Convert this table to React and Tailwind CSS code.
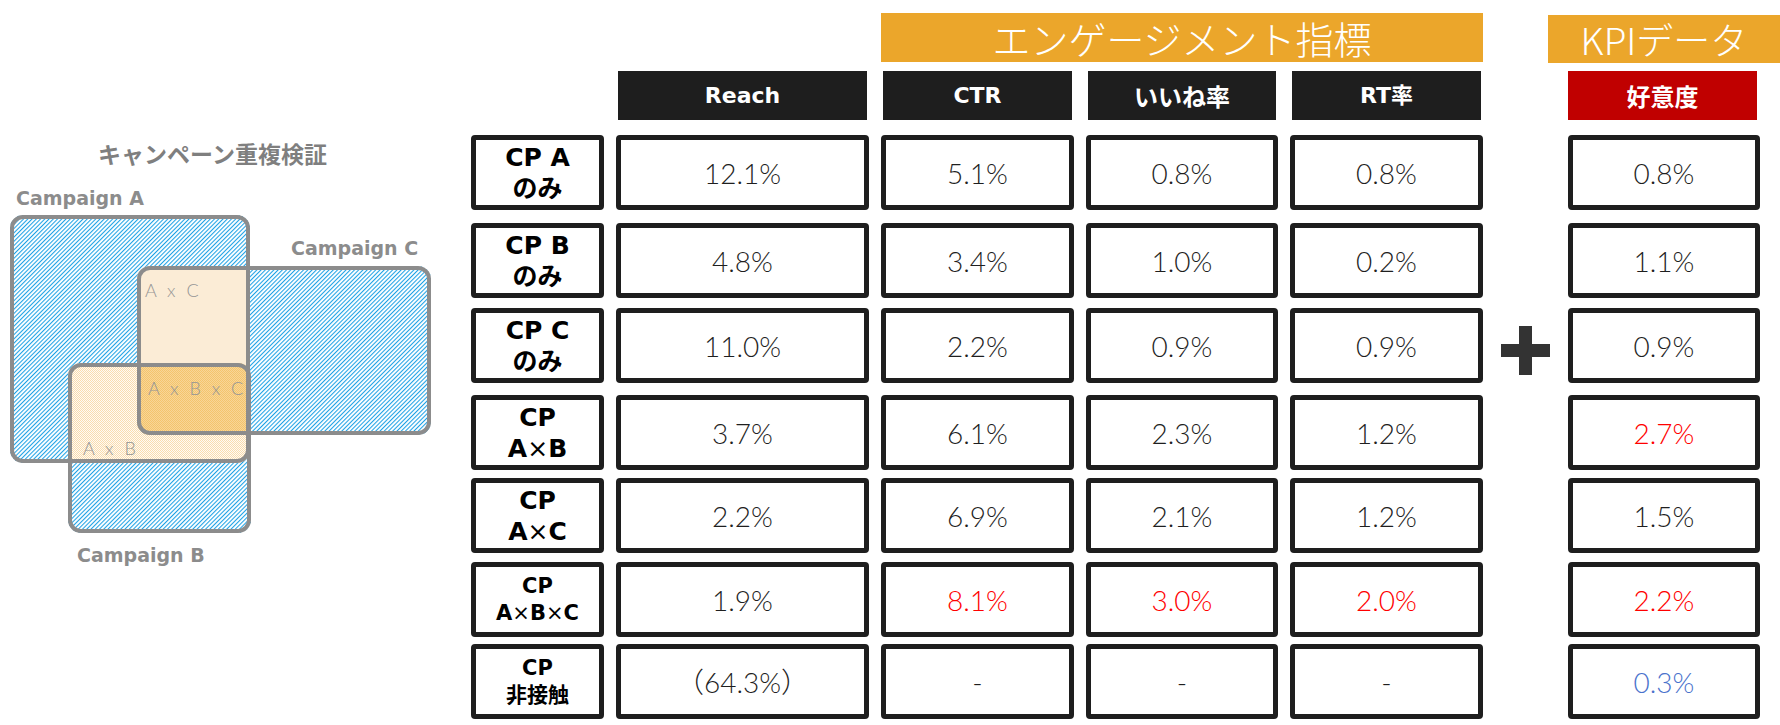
import React from 'react';

const GRID = 'grid grid-cols-[133px_253px_193px_192px_193px_61px_192px] gap-x-[12px]';
const JP = "font-['Noto_Sans_CJK_JP',sans-serif]";
const BOLD_LATIN = "font-['DejaVu_Sans','Noto_Sans_CJK_JP',sans-serif] font-bold";

const tone = {
    red: 'text-[#ff0000]',
    blue: 'text-[#4a72cc]',
    base: 'text-[#1f1f1f]',
};

const rows = [
    { top: ['CP A'], bottom: 'のみ', small: false, mt: 'mt-[15px]', values: [['12.1%'], ['5.1%'], ['0.8%'], ['0.8%'], ['0.8%']] },
    { top: ['CP B'], bottom: 'のみ', small: false, mt: 'mt-[13px]', values: [['4.8%'], ['3.4%'], ['1.0%'], ['0.2%'], ['1.1%']] },
    { top: ['CP C'], bottom: 'のみ', small: false, mt: 'mt-[10px]', values: [['11.0%'], ['2.2%'], ['0.9%'], ['0.9%'], ['0.9%']], plus: true },
    { top: ['CP'], bottom: ['A', 'B'], small: false, mt: 'mt-[12px]', values: [['3.7%'], ['6.1%'], ['2.3%'], ['1.2%'], ['2.7%', 'red']] },
    { top: ['CP'], bottom: ['A', 'C'], small: false, mt: 'mt-[8px]', values: [['2.2%'], ['6.9%'], ['2.1%'], ['1.2%'], ['1.5%']] },
    { top: ['CP'], bottom: ['A', 'B', 'C'], small: true, mt: 'mt-[9px]', values: [['1.9%'], ['8.1%', 'red'], ['3.0%', 'red'], ['2.0%', 'red'], ['2.2%', 'red']] },
    { top: ['CP'], bottom: '非接触', small: true, mt: 'mt-[7px]', values: [['（64.3%）'], ['-'], ['-'], ['-'], ['0.3%', 'blue']] },
];

const Cell = ({ children, className = '' }) => (
    <div className={`h-[75px] border-[5px] border-[#1e1e1e] rounded-[4px] bg-white flex items-center justify-center ${className}`}>
        {children}
    </div>
);

const Label = ({ row }) => {
    const size = row.small ? 'text-[21px] leading-[27px]' : 'text-[25px] leading-[31px]';
    return (
        <Cell>
            <div className={`${BOLD_LATIN} ${size} text-black text-center`}>
                <div>{row.top}</div>
                <div>
                    {Array.isArray(row.bottom)
                        ? row.bottom.map((part, i) => (
                              <React.Fragment key={i}>
                                  {i > 0 && <span className="font-normal">×</span>}
                                  {part}
                              </React.Fragment>
                          ))
                        : row.bottom}
                </div>
            </div>
        </Cell>
    );
};

const Value = ({ v, c }) => (
    <Cell>
        <span className={`font-['Lato','Noto_Sans_CJK_JP',sans-serif] font-light text-[28px] ${tone[c || 'base']}`}>{v}</span>
    </Cell>
);

const Plus = () => (
    <svg width="49" height="49" viewBox="0 0 49 49">
        <rect x="18" y="0" width="13" height="49" fill="#333333" />
        <rect x="0" y="18" width="49" height="13" fill="#333333" />
    </svg>
);

const Venn = () => (
    <svg width="440" height="400" viewBox="0 170 440 400" className="block">
        <defs>
            <pattern id="hatch" width="3" height="3" patternUnits="userSpaceOnUse" patternTransform="rotate(45)">
                <rect width="3" height="3" fill="#ffffff" />
                <rect width="1.05" height="3" fill="#1ea2e6" />
            </pattern>
            <pattern id="dotsLight" width="2" height="2" patternUnits="userSpaceOnUse">
                <rect width="2" height="2" fill="#fffbf4" />
                <rect width="1" height="1" fill="#f9dcae" />
                <rect x="1" y="1" width="1" height="1" fill="#f9dcae" />
            </pattern>
            <pattern id="dotsDeep" width="2" height="2" patternUnits="userSpaceOnUse">
                <rect width="2" height="2" fill="#f8d697" />
                <rect width="1" height="1" fill="#f4c46d" />
                <rect x="1" y="1" width="1" height="1" fill="#f4c46d" />
            </pattern>
            <clipPath id="clipA">
                <rect x="10" y="215" width="240" height="248" rx="13" />
            </clipPath>
            <clipPath id="clipC">
                <rect x="137" y="266" width="294" height="169" rx="13" />
            </clipPath>
        </defs>

        {/* campaign areas */}
        <rect x="10" y="215" width="240" height="248" rx="13" fill="url(#hatch)" />
        <rect x="137" y="266" width="294" height="169" rx="13" fill="url(#hatch)" />
        <rect x="68" y="363" width="183" height="170" rx="13" fill="url(#hatch)" />

        {/* overlaps */}
        <rect x="137" y="266" width="294" height="169" rx="13" fill="#fbecd6" clipPath="url(#clipA)" />
        <rect x="68" y="363" width="183" height="170" rx="13" fill="url(#dotsLight)" clipPath="url(#clipA)" />
        <g clipPath="url(#clipA)">
            <rect x="68" y="363" width="183" height="170" rx="13" fill="url(#dotsDeep)" clipPath="url(#clipC)" />
        </g>

        {/* outlines */}
        <g fill="none" stroke="#8c8c8c" strokeWidth="4">
            <rect x="12" y="217" width="236" height="244" rx="11" />
            <rect x="139" y="268" width="290" height="165" rx="11" />
            <rect x="70" y="365" width="179" height="166" rx="11" />
        </g>

        <g fontFamily="DejaVu Sans, sans-serif" fontWeight="700" fontSize="19" fill="#8c8c8c">
            <text x="16" y="205">Campaign A</text>
            <text x="291" y="255">Campaign C</text>
            <text x="77" y="562">Campaign B</text>
        </g>
        <g fontFamily="Lato, sans-serif" fontWeight="300" fontSize="18" fill="#959595" letterSpacing="3">
            <text x="145" y="297">A x C</text>
            <text x="148" y="395">A x B x C</text>
            <text x="83" y="455">A x B</text>
        </g>
    </svg>
);

export default function App() {
    return (
        <div className="w-[1780px] h-[725px] bg-white flex overflow-hidden">
            {/* Left: overlap diagram */}
            <div className="w-[471px] shrink-0">
                <div className={`${JP} w-[425px] mt-[139px] text-center text-[23px] leading-[28px] font-bold text-[#7f7f7f]`}>
                    キャンペーン重複検証
                </div>
                <div className="mt-[3px]">
                    <Venn />
                </div>
            </div>

            {/* Right: table */}
            <div className="flex flex-col">
                <div className={`${GRID} h-[63px]`}>
                    <div className="col-start-3 col-span-3 mt-[13px] h-[49px] bg-[#eba62b] flex items-center justify-center">
                        <span className={`${JP} font-light text-[38px] leading-none text-white`}>エンゲージメント指標</span>
                    </div>
                    <div className="col-start-7 ml-[-20px] w-[232px] mt-[15px] h-[48px] bg-[#eba62b] flex items-center justify-center">
                        <span className={`${JP} font-light text-[37px] leading-none text-white`}>KPIデータ</span>
                    </div>
                </div>

                <div className={`${GRID} mt-[8px] h-[49px]`}>
                    <div className={`col-start-2 mx-[2px] bg-[#1e1e1e] flex items-center justify-center text-white text-[22px] ${BOLD_LATIN}`}>Reach</div>
                    <div className={`mx-[2px] bg-[#1e1e1e] flex items-center justify-center text-white text-[22px] ${BOLD_LATIN}`}>CTR</div>
                    <div className={`mx-[2px] bg-[#1e1e1e] flex items-center justify-center text-white text-[24px] ${JP} font-bold`}>いいね率</div>
                    <div className={`mx-[2px] bg-[#1e1e1e] flex items-center justify-center text-white text-[22px] ${BOLD_LATIN}`}>RT率</div>
                    <div className={`col-start-7 mr-[3px] bg-[#c00000] flex items-center justify-center text-white text-[24px] ${JP} font-bold`}>好意度</div>
                </div>

                {rows.map((row, i) => (
                    <div key={i} className={`${GRID} ${row.mt}`}>
                        <Label row={row} />
                        {row.values.slice(0, 4).map(([v, c], j) => (
                            <Value key={j} v={v} c={c} />
                        ))}
                        <div className="flex items-center justify-center pt-[10px]">{row.plus && <Plus />}</div>
                        <Value v={row.values[4][0]} c={row.values[4][1]} />
                    </div>
                ))}
            </div>
        </div>
    );
}
